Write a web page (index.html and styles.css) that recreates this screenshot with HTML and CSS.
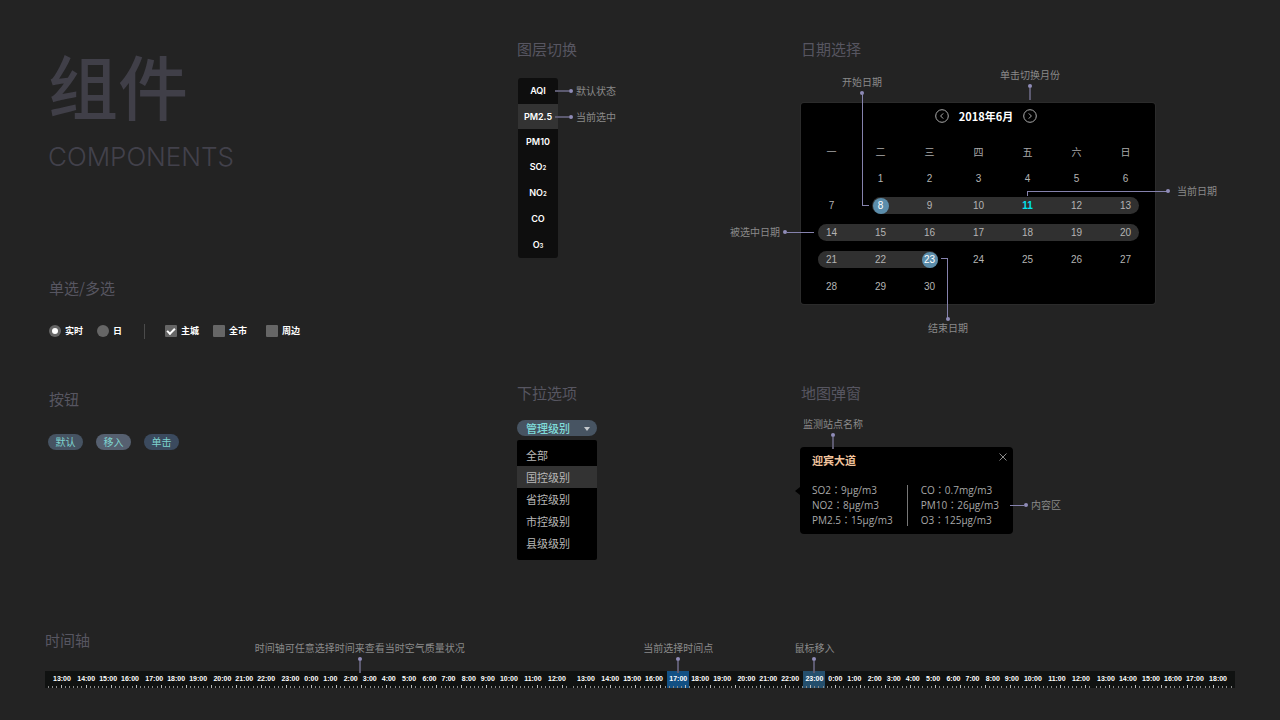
FILE: index.html
```html
<!DOCTYPE html>
<html lang="zh-CN">
<head>
  <meta charset="UTF-8">
  <meta name="viewport" content="width=device-width, initial-scale=1">
  <title>组件</title>
  <link rel="stylesheet" href="styles.css">
</head>
<body>
  <main class="board">
    <div class="intro">
      <h1>组件</h1>
      <p class="subtitle">COMPONENTS</p>

      <section class="choices">
        <h2>单选/多选</h2>
        <div class="options">
          <label><input type="radio" name="period" checked>实时</label>
          <label><input type="radio" name="period">日</label>
          <span class="divider"></span>
          <label><input type="checkbox" checked>主城</label>
          <label><input type="checkbox">全市</label>
          <label class="last"><input type="checkbox">周边</label>
        </div>
      </section>

      <section class="buttons">
        <h2>按钮</h2>
        <div class="button-row">
          <button type="button" class="btn">默认</button>
          <button type="button" class="btn btn-hover">移入</button>
          <button type="button" class="btn btn-active">单击</button>
        </div>
      </section>
    </div>

    <section>
      <h2>图层切换</h2>
      <ul class="layers">
        <li><button type="button">AQI</button>
          <div class="callout right"><i class="line"></i><i class="dot"></i><span>默认状态</span></div></li>
        <li class="selected"><button type="button">PM2.5</button>
          <div class="callout right"><i class="line"></i><i class="dot"></i><span>当前选中</span></div></li>
        <li><button type="button">PM10</button></li>
        <li><button type="button">SO<sub>2</sub></button></li>
        <li><button type="button">NO<sub>2</sub></button></li>
        <li><button type="button">CO</button></li>
        <li><button type="button">O<sub>3</sub></button></li>
      </ul>
    </section>

    <section>
      <h2>日期选择</h2>
      <div class="calendar">
        <div class="calendar-head">
          <button type="button" aria-label="上个月">
            <svg viewBox="0 0 14 14" width="14" height="14"><circle cx="7" cy="7" r="6.3"/><path d="M8.2 4.4 5.6 7l2.6 2.6"/></svg>
          </button>
          <strong>2018年6月</strong>
          <button type="button" aria-label="下个月">
            <svg viewBox="0 0 14 14" width="14" height="14"><circle cx="7" cy="7" r="6.3"/><path d="M5.8 4.4 8.4 7l-2.6 2.6"/></svg>
          </button>
        </div>
        <table>
          <thead>
            <tr><th>一</th><th>二</th><th>三</th><th>四</th><th>五</th><th>六</th><th>日</th></tr>
          </thead>
          <tbody>
            <tr>
              <td></td>
              <td><button type="button">1</button></td>
              <td><button type="button">2</button></td>
              <td><button type="button">3</button></td>
              <td><button type="button">4</button></td>
              <td><button type="button">5</button></td>
              <td><button type="button">6</button></td>
            </tr>
            <tr>
              <td><button type="button">7</button></td>
              <td class="range start"><button type="button" class="picked">8</button></td>
              <td class="range"><button type="button">9</button></td>
              <td class="range"><button type="button">10</button></td>
              <td class="range"><button type="button" class="today">11</button></td>
              <td class="range"><button type="button">12</button></td>
              <td class="range row-end"><button type="button">13</button></td>
            </tr>
            <tr>
              <td class="range row-start"><button type="button">14</button></td>
              <td class="range"><button type="button">15</button></td>
              <td class="range"><button type="button">16</button></td>
              <td class="range"><button type="button">17</button></td>
              <td class="range"><button type="button">18</button></td>
              <td class="range"><button type="button">19</button></td>
              <td class="range row-end"><button type="button">20</button></td>
            </tr>
            <tr>
              <td class="range row-start"><button type="button">21</button></td>
              <td class="range"><button type="button">22</button></td>
              <td class="range end"><button type="button" class="picked">23</button></td>
              <td><button type="button">24</button></td>
              <td><button type="button">25</button></td>
              <td><button type="button">26</button></td>
              <td><button type="button">27</button></td>
            </tr>
            <tr>
              <td><button type="button">28</button></td>
              <td><button type="button">29</button></td>
              <td><button type="button">30</button></td>
              <td></td><td></td><td></td><td></td>
            </tr>
          </tbody>
        </table>

        <div class="callout up note-start"><span>开始日期</span><i class="dot"></i></div>
        <i class="elbow elbow-start"></i>
        <div class="callout up note-month"><span>单击切换月份</span><i class="dot"></i><i class="line"></i></div>
        <i class="elbow elbow-today"></i>
        <div class="callout right note-today"><i class="dot"></i><span>当前日期</span></div>
        <div class="callout left note-range"><span>被选中日期</span><i class="dot"></i><i class="line"></i></div>
        <i class="elbow elbow-end"></i>
        <div class="callout up note-end"><i class="dot"></i><span>结束日期</span></div>
      </div>
    </section>

    <section>
      <h2>下拉选项</h2>
      <div class="dropdown">
        <div class="select">
          <select aria-label="管理级别">
            <option>管理级别</option>
          </select>
        </div>
        <ul class="menu">
          <li>全部</li>
          <li class="selected">国控级别</li>
          <li>省控级别</li>
          <li>市控级别</li>
          <li>县级级别</li>
        </ul>
      </div>
    </section>

    <section>
      <h2>地图弹窗</h2>
      <div class="popup">
        <h3>迎宾大道</h3>
        <button type="button" class="close" aria-label="关闭">
          <svg viewBox="0 0 8 8" width="8" height="8"><path d="M.5.5l7 7M7.5.5l-7 7"/></svg>
        </button>
        <div class="readings" lang="zh-TW">
          <ul>
            <li>SO2：9μg/m3</li>
            <li>NO2：8μg/m3</li>
            <li>PM2.5：15μg/m3</li>
          </ul>
          <ul>
            <li>CO：0.7mg/m3</li>
            <li>PM10：26μg/m3</li>
            <li>O3：125μg/m3</li>
          </ul>
        </div>
        <div class="callout up note-name"><span>监测站点名称</span><i class="dot"></i><i class="line"></i></div>
        <div class="callout right note-content"><i class="line"></i><i class="dot"></i><span>内容区</span></div>
      </div>
    </section>
  </main>

  <section class="axis">
    <h2>时间轴</h2>
    <div class="timeline">
      <div class="day day-1">
        <div class="hours"><button type="button">13:00</button></div>
        <div class="hours"><button type="button">14:00</button><button type="button">15:00</button><button type="button">16:00</button></div>
        <div class="hours"><button type="button">17:00</button><button type="button">18:00</button><button type="button">19:00</button></div>
        <div class="hours"><button type="button">20:00</button><button type="button">21:00</button><button type="button">22:00</button></div>
        <div class="hours short"><button type="button">23:00</button><button type="button">0:00</button><button type="button">1:00</button></div>
        <div class="hours short">
          <button type="button">2:00</button><button type="button">3:00</button><button type="button">4:00</button>
          <div class="callout up note-axis"><span>时间轴可任意选择时间来查看当时空气质量状况</span><i class="dot"></i><i class="line"></i></div>
        </div>
        <div class="hours"><button type="button">5:00</button></div>
        <div class="hours short"><button type="button">6:00</button><button type="button">7:00</button></div>
        <div class="hours short"><button type="button">8:00</button><button type="button">9:00</button><button type="button">10:00</button></div>
        <div class="hours"><button type="button">11:00</button></div>
        <div class="hours"><button type="button">12:00</button></div>
      </div>
      <div class="day day-2">
        <div class="hours"><button type="button">13:00</button></div>
        <div class="hours"><button type="button">14:00</button><button type="button">15:00</button><button type="button">16:00</button></div>
        <div class="hours">
          <div class="mark">
            <button type="button" class="current">17:00</button>
            <div class="callout up"><span>当前选择时间点</span><i class="dot"></i><i class="line"></i></div>
          </div>
          <button type="button">18:00</button><button type="button">19:00</button>
        </div>
        <div class="hours"><button type="button">20:00</button><button type="button">21:00</button><button type="button">22:00</button></div>
        <div class="hours short">
          <div class="mark">
            <button type="button" class="hover">23:00</button>
            <div class="callout up"><span>鼠标移入</span><i class="dot"></i><i class="line"></i></div>
          </div>
          <button type="button">0:00</button><button type="button">1:00</button>
        </div>
        <div class="hours short"><button type="button">2:00</button><button type="button">3:00</button><button type="button">4:00</button></div>
        <div class="hours"><button type="button">5:00</button></div>
        <div class="hours short"><button type="button">6:00</button><button type="button">7:00</button></div>
        <div class="hours short"><button type="button">8:00</button><button type="button">9:00</button><button type="button">10:00</button></div>
        <div class="hours"><button type="button">11:00</button></div>
        <div class="hours"><button type="button">12:00</button></div>
      </div>
      <div class="day day-3">
        <div class="hours"><button type="button">13:00</button><button type="button">14:00</button></div>
        <div class="hours"><button type="button">15:00</button><button type="button">16:00</button><button type="button">17:00</button></div>
        <div class="hours"><button type="button">18:00</button></div>
      </div>
    </div>
  </section>
</body>
</html>
```
FILE: styles.css
```css
*, *::before, *::after {
  box-sizing: border-box;
}
* {
  margin: 0;
  padding: 0;
}

:root {
  --bg: #232323;
  --heading: #575661;
  --note: #8a8a8a;
  --dot: #8f8cb8;
  --line: #8582ad;
  --line-dim: #5c5a70;
  --cjk: "Noto Sans CJK SC", sans-serif;
}

body {
  background: var(--bg);
  color: #fff;
  font-family: "Liberation Sans", var(--cjk);
  font-size: 10px;
  padding: 39px 45px 30px;
}
ul {
  list-style: none;
}
button, input, select {
  font: inherit;
  color: inherit;
  border: none;
  background: none;
  cursor: pointer;
}
svg {
  display: block;
  fill: none;
  stroke: currentColor;
}

h1 {
  margin-top: 6px;
  font: 500 70px/80px var(--cjk);
  color: #403f48;
}
h2 {
  font: 400 15px/20px var(--cjk);
  color: var(--heading);
}
.subtitle {
  margin-top: 17px;
  font: 300 26px/30px Inter, sans-serif;
  color: #42414b;
}

.board {
  display: grid;
  grid-template-columns: 469fr 284fr 434fr;
  row-gap: 79px;
  padding-left: 3px;
}
.intro {
  grid-row: span 2;
}
.intro h2 {
  padding-left: 1px;
}

/* radio + checkbox */
.choices {
  margin-top: 106px;
}
.options {
  display: flex;
  align-items: center;
  gap: 14px;
  height: 16px;
  margin-top: 25px;
  padding-left: 1px;
}
.options label {
  display: flex;
  align-items: center;
  gap: 4px;
  font: 700 9px/16px var(--cjk);
}
.options .last {
  margin-left: 5px;
}
.options input {
  appearance: none;
  display: grid;
  place-items: center;
  width: 12px;
  height: 12px;
  background: #666;
}
.options input[type="radio"] {
  border-radius: 50%;
}
.options input[type="radio"]:checked::before {
  content: "";
  width: 6px;
  height: 6px;
  border-radius: 50%;
  background: #fff;
}
.options input[type="checkbox"] {
  border-radius: 1px;
}
.options input[type="checkbox"]:checked::before {
  content: "";
  width: 8px;
  height: 5px;
  margin-bottom: 2px;
  border: solid #fff;
  border-width: 0 0 2px 2px;
  transform: rotate(-45deg);
}
.divider {
  width: 1px;
  height: 15px;
  margin: 0 6px 0 8px;
  background: #4b4b4b;
}

/* buttons */
.buttons {
  margin-top: 50px;
}
.button-row {
  display: flex;
  gap: 13px;
  margin-top: 25px;
}
.btn {
  width: 35px;
  height: 16px;
  border-radius: 8px;
  background: #465362;
  color: #7ed3cf;
  font: 400 10px/16px var(--cjk);
}
.btn-hover {
  background: #566070;
}
.btn-active {
  background: #3b4a5e;
}

/* layer switch */
.layers {
  display: grid;
  grid-auto-rows: 1fr;
  width: 40px;
  height: 180px;
  margin: 19px 0 0 1px;
  border-radius: 3px;
  background: #0e0e0e;
}
.layers li {
  position: relative;
}
.layers .selected {
  background: #333;
}
.layers button {
  width: 100%;
  height: 100%;
  font: 600 9px/24px Inter, sans-serif;
}
.layers sub {
  font-size: 6px;
  vertical-align: baseline;
}

/* callouts */
.callout {
  position: absolute;
  display: flex;
  align-items: center;
  color: var(--note);
  font: 400 10px/14px var(--cjk);
  white-space: nowrap;
  pointer-events: none;
}
.dot {
  width: 4px;
  height: 4px;
  border-radius: 50%;
  background: var(--dot);
}
.callout.right .line, .callout.left .line {
  height: 1px;
  background: var(--line);
}
.callout.right .dot {
  margin-right: 3px;
}
.callout.left .dot {
  margin-left: 3px;
}
.callout.up {
  flex-direction: column;
  transform: translateX(-50%);
}
.callout.up span + .dot {
  margin-top: 2px;
}
.callout.up .line {
  width: 2px;
  height: 12px;
  background: var(--line-dim);
}
.layers .callout {
  left: 37px;
  top: 6px;
}
.layers .callout .line {
  width: 14px;
  height: 2px;
  background: var(--line-dim);
}

/* date picker */
.calendar {
  position: relative;
  width: fit-content;
  margin-top: 44px;
  padding: 0 5px 4px 6px;
  border-radius: 3px;
  background: #000;
  box-shadow: 0 0 0 1px #2b2b2b;
}
.calendar-head {
  display: flex;
  align-items: flex-start;
  justify-content: center;
  gap: 10px;
  height: 36px;
  padding: 6px 0 0 15px;
}
.calendar-head button {
  color: #aaa;
}
.calendar-head strong {
  font: 700 11px/14px var(--cjk);
}
.calendar table {
  border-collapse: collapse;
}
.calendar th {
  width: 49px;
  height: 26px;
  color: #aaa;
  font: 400 10px/14px var(--cjk);
}
.calendar td {
  position: relative;
  height: 27px;
  text-align: center;
}
.calendar td button {
  position: relative;
  display: block;
  width: 16px;
  height: 16px;
  margin: 0 auto;
  border-radius: 50%;
  color: #b4b4b4;
  font-size: 10px;
  line-height: 16px;
}
.calendar td .picked {
  background: #5b8dab;
  color: #fff;
}
.calendar td .today {
  color: #00e4ee;
  font-weight: 700;
}
.range::before {
  content: "";
  position: absolute;
  inset: 5px 0;
  background: #303030;
}
.range.start::before {
  left: 16px;
  border-radius: 9px 0 0 9px;
}
.range.end::before {
  right: 16px;
  border-radius: 0 9px 9px 0;
}
.range.row-start::before {
  left: 11px;
  border-radius: 9px 0 0 9px;
}
.range.row-end::before {
  right: 11px;
  border-radius: 0 9px 9px 0;
}

.elbow {
  position: absolute;
  border: 0 solid var(--line);
  pointer-events: none;
}
.note-start {
  left: 61px;
  top: -28px;
}
.elbow-start {
  left: 61px;
  top: -10px;
  width: 7px;
  height: 113px;
  border-width: 0 0 1px 1px;
}
.note-month {
  left: 229px;
  top: -35px;
}
.note-month .line {
  width: 1px;
  height: 18px;
  background: var(--line);
}
.elbow-today {
  left: 226px;
  top: 88px;
  width: 140px;
  height: 5px;
  border-width: 1px 0 0 1px;
}
.calendar .note-today {
  left: 365px;
  top: 81px;
}
.calendar .note-today .dot {
  margin-right: 7px;
}
.note-range {
  right: 341px;
  top: 122px;
}
.note-range .line {
  width: 27px;
}
.elbow-end {
  left: 140px;
  top: 155px;
  width: 7px;
  height: 60px;
  border-width: 1px 1px 0 0;
}
.note-end {
  left: 147px;
  top: 214px;
}

/* dropdown */
.dropdown {
  width: 80px;
  margin-top: 17px;
}
.select {
  position: relative;
}
.select select {
  appearance: none;
  display: block;
  width: 100%;
  height: 16px;
  padding-left: 9px;
  border-radius: 8px;
  background: #475462;
  color: #7fdcd9;
  font: 500 11px/16px var(--cjk);
}
.select::after {
  content: "";
  position: absolute;
  right: 7px;
  top: 7px;
  border: solid transparent;
  border-width: 4px 3px 0;
  border-top-color: #c4c9cd;
}
.menu {
  margin-top: 4px;
  padding: 4px 0 6px;
  border-radius: 2px;
  background: #000;
}
.menu li {
  padding-left: 9px;
  color: #b8b8b8;
  font: 400 11px/22px var(--cjk);
}
.menu .selected {
  background: #333;
}

/* map popup */
.popup {
  position: relative;
  width: fit-content;
  margin: 44px 0 0 -1px;
  padding: 6px 14px 6px 12px;
  border-radius: 4px;
  background: #000;
}
.popup::before {
  content: "";
  position: absolute;
  left: -5px;
  top: 40px;
  border: solid transparent;
  border-width: 4px 5px 4px 0;
  border-right-color: #000;
}
.popup h3 {
  color: #f0c39c;
  font: 700 11px/15px var(--cjk);
}
.close {
  position: absolute;
  right: 6px;
  top: 6px;
  color: #8a8a8a;
}
.readings {
  display: flex;
  margin-top: 15px;
  color: #a8a8a8;
  font: 400 10px/15px "Open Sans", "Noto Sans CJK TC", sans-serif;
}
.readings ul + ul {
  position: relative;
  margin-left: 14px;
  padding-left: 14px;
}
.readings ul + ul::before {
  content: "";
  position: absolute;
  left: 0;
  top: 2px;
  bottom: 2px;
  width: 1px;
  background: #777;
}
.note-name {
  left: 33px;
  top: -30px;
}
.popup .note-content {
  left: 210px;
  top: 51px;
}
.note-content .line {
  width: 14px;
}

/* time axis */
.axis {
  margin-top: 70px;
}
.timeline {
  display: grid;
  grid-template-columns: 525fr 523fr 142fr;
  margin-top: 21px;
}
.day {
  --step: calc(100% / 125);
  position: relative;
  display: flex;
  justify-content: space-between;
  height: 17px;
  background: #101211;
}
.day-1 {
  padding: 0 4px 0 8px;
}
.day-2 {
  padding: 0 3px 0 7px;
}
.day-3 {
  --step: calc(100% / 32);
  padding: 0 8px 0 4px;
}
.day::after {
  content: "";
  position: absolute;
  left: 3px;
  right: 0;
  bottom: 0;
  height: 3px;
  background:
    repeating-linear-gradient(to right, transparent 0 calc(var(--step) * 3), #bbb calc(var(--step) * 3) calc(var(--step) * 3 + 1px), transparent calc(var(--step) * 3 + 1px) calc(var(--step) * 6)),
    repeating-linear-gradient(to right, #8a8a8a 0 1px, transparent 1px var(--step)) bottom / 100% 2px no-repeat;
  pointer-events: none;
}
.hours {
  position: relative;
  display: flex;
  gap: 4px;
}
.hours.short {
  gap: 5px;
}
.hours button {
  height: 17px;
  font-size: 7px;
  font-weight: 700;
  line-height: 15px;
  padding-bottom: 2px;
}
.mark {
  position: relative;
  margin: 0 -2px;
}
.mark button {
  padding: 0 2px 2px;
}
.current {
  background: #125084;
}
.hover {
  background: #244f6d;
}
.mark .callout {
  left: 50%;
  top: -30px;
}
.note-axis {
  left: 16px;
  top: -30px;
}
```
